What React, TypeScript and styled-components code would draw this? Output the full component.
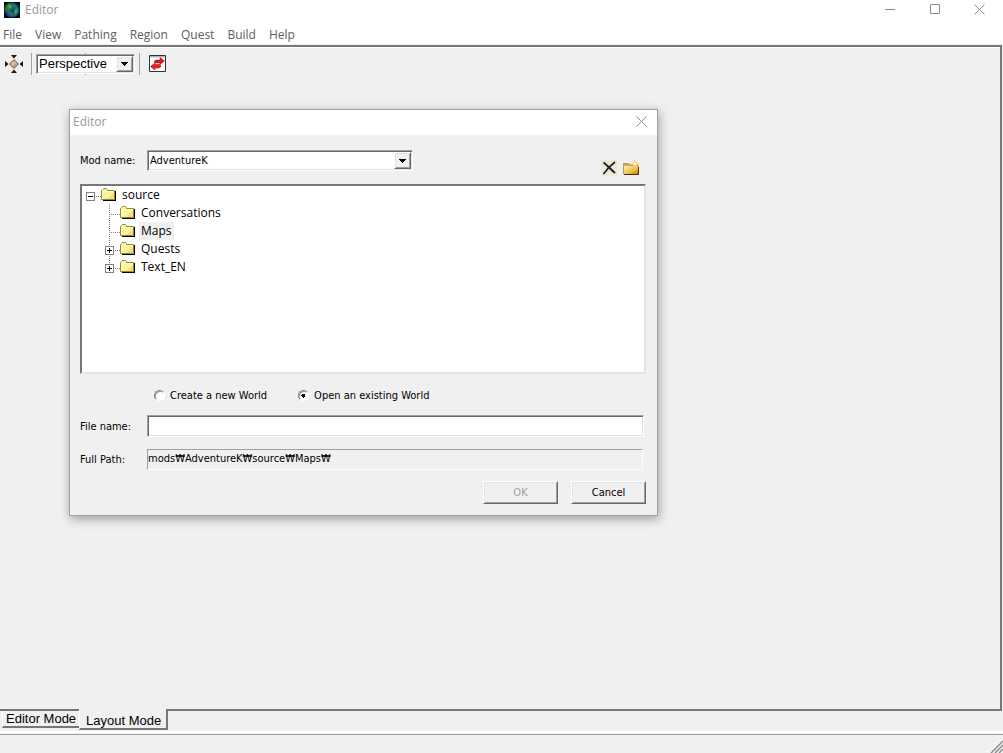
import React, { useState } from "react";
import styled, { createGlobalStyle, css } from "styled-components";

const face = "#f0f0f0";
const shade = "#a0a0a0";
const dark = "#696969";
const light = "#e3e3e3";

const uiFont = `"Open Sans", "Noto Sans CJK KR", sans-serif`;
const dialogFont = `"DejaVu Sans Condensed", "Noto Sans CJK KR", sans-serif`;
const toolFont = `"Liberation Sans", Arial, sans-serif`;

const GlobalStyle = createGlobalStyle`
  * { box-sizing: border-box; }
  body { margin: 0; background: ${face}; font-family: ${uiFont}; font-size: 12px; color: #000; }
  button, input, select { font: inherit; color: inherit; margin: 0; }
`;

const sunken = css`
  border: 1px solid;
  border-color: ${shade} #fff #fff ${shade};
  box-shadow: inset 1px 1px 0 ${dark}, inset -1px -1px 0 ${light};
`;

const raised = css`
  border: 1px solid;
  border-color: #fff ${dark} ${dark} #fff;
  box-shadow: inset 1px 1px 0 ${light}, inset -1px -1px 0 ${shade};
`;

const Window = styled.div`
  position: relative;
  display: flex;
  flex-direction: column;
  min-height: 100vh;
  background: ${face};
`;

const TitleBar = styled.header`
  display: flex;
  align-items: center;
  height: 20px;
  padding: 0 1px 0 4px;
  background: #fff;
  color: #999;
`;

const Title = styled.h1`
  flex: 1;
  margin: 0 0 0 5px;
  font-size: 12px;
  font-weight: 400;
  line-height: 18px;
`;

const PlainButton = styled.button`
  display: flex;
  align-items: center;
  justify-content: center;
  padding: 0;
  border: 0;
  background: none;
`;

const CaptionButton = styled(PlainButton)`
  width: 45px;
  height: 18px;
  align-self: flex-start;
`;

const MenuBar = styled.nav`
  display: flex;
  gap: 13px;
  height: 24px;
  padding: 0 3px;
  background: #fff;
`;

const MenuItem = styled(PlainButton)`
  height: 28px;
  margin-top: 1px;
  color: #606060;
  line-height: 28px;
  align-self: flex-start;
`;

const Workspace = styled.main`
  flex: 1;
  margin: 1px 1px 0 0;
  border: solid #777;
  border-width: 2px 2px 2px 0;
  box-shadow: inset 0 1px 0 #fff;
`;

const Toolbar = styled.div`
  display: flex;
  align-items: center;
  height: 33px;
  padding: 0 5px;
  font-family: ${toolFont};
  font-size: 13px;
`;

const Separator = styled.span<{ $before: number; $after: number }>`
  width: 1px;
  height: 22px;
  margin: 0 ${(p) => p.$after}px 0 ${(p) => p.$before}px;
  background: ${shade};
`;

const ToolCombo = styled.div`
  width: 99px;
  padding: 1px 0;
  background: linear-gradient(${shade}, ${shade}) 49px 0 / 1px 100% no-repeat;
`;

const Combo = styled.div<{ $height: number }>`
  position: relative;
  display: flex;
  height: ${(p) => p.$height}px;
  background: #fff;
  ${sunken}
`;

const Select = styled.select`
  appearance: none;
  flex: 1;
  min-width: 0;
  padding: 0 18px 0 2px;
  border: 0;
  outline: 0;
  background: transparent;
`;

const ComboArrow = styled.span`
  position: absolute;
  top: 1px;
  right: 1px;
  bottom: 1px;
  width: 17px;
  display: flex;
  align-items: center;
  justify-content: center;
  background: ${face};
  pointer-events: none;
  ${raised}
`;

const TabStrip = styled.div`
  display: flex;
  align-items: flex-start;
  height: 20px;
  padding-left: 2px;
  font-family: ${toolFont};
  font-size: 13px;
`;

const Tab = styled.button<{ $active?: boolean }>`
  position: relative;
  height: ${(p) => (p.$active ? 21 : 17)}px;
  margin-top: ${(p) => (p.$active ? -2 : 0)}px;
  padding: ${(p) => (p.$active ? "3px 5px 0 6px" : "0 3px")};
  border: solid;
  border-width: 0 ${(p) => (p.$active ? 2 : 0)}px 2px 1px;
  border-color: #fff #777 #777 #fff;
  background: ${face};
  line-height: 15px;
`;

const StatusBar = styled.footer`
  display: flex;
  align-items: flex-end;
  justify-content: flex-end;
  height: 22px;
  border-top: 1px solid #fff;
  box-shadow: inset 0 1px 0 #fff, inset 0 2px 0 ${face}, inset 0 3px 0 ${shade};
`;

const Dialog = styled.section`
  position: absolute;
  top: 109px;
  left: 69px;
  width: 589px;
  border: 1px solid ${shade};
  background: ${face};
  box-shadow: 1px 3px 10px rgba(0, 0, 0, 0.35);
  font-family: ${dialogFont};
  font-size: 11px;
`;

const DialogTitle = styled.header`
  display: flex;
  align-items: center;
  justify-content: space-between;
  height: 25px;
  padding: 0 10px 2px 3px;
  background: #fff;
  color: #999;
  font-family: ${uiFont};
  font-size: 12px;
`;

const DialogBody = styled.form`
  padding: 15px 11px 11px 10px;
`;

const ModRow = styled.div`
  display: grid;
  grid-template-columns: 67px 266px 1fr;
  height: 26px;
  margin-bottom: 8px;
`;

const Label = styled.label`
  padding-top: 1px;
  line-height: 20px;
`;

const IconTools = styled.div`
  display: flex;
  justify-content: flex-end;
  align-items: flex-end;
  gap: 6px;
  padding-right: 7px;
`;

const Tree = styled.ul`
  height: 190px;
  margin: 0;
  padding: 0;
  list-style: none;
  background: #fff;
  border: 2px solid;
  border-color: #777 ${light} ${light} #777;
  font-family: ${uiFont};
  font-size: 12px;
`;

const Branch = styled.ul`
  margin: 0;
  padding: 0 0 0 19px;
  list-style: none;
`;

const TreeRow = styled.div`
  display: flex;
  align-items: center;
  height: 18px;
`;

const dotsAcross = `repeating-linear-gradient(90deg, #808080 0 1px, transparent 1px 2px) 8px 10px / 11px 1px no-repeat`;
const dotsDown = (h: string) =>
  `repeating-linear-gradient(#808080 0 1px, transparent 1px 2px) 8px 0 / 1px ${h} no-repeat`;

const Junction = styled.span<{ $root?: boolean; $last?: boolean }>`
  width: 19px;
  height: 18px;
  padding: 6px 0 0 4px;
  background: ${(p) => (p.$root ? dotsAcross : `${dotsAcross}, ${dotsDown(p.$last ? "11px" : "100%")}`)};
`;

const Expander = styled(PlainButton)`
  width: 9px;
  height: 9px;
  border: 1px solid #808080;
  background: #fff;
`;

const NodeName = styled.button<{ $selected?: boolean }>`
  height: 18px;
  margin-left: 3px;
  padding: 0 2px;
  border: 0;
  background: ${(p) => (p.$selected ? face : "transparent")};
  line-height: 18px;
`;

const Choices = styled.div`
  display: flex;
  gap: 31px;
  height: 20px;
  margin: 11px 0 10px;
  padding-left: 74px;
`;

const Choice = styled.label`
  display: flex;
  align-items: center;
  gap: 5px;
`;

const Radio = styled.input`
  appearance: none;
  width: 11px;
  height: 11px;
  border: 1px solid;
  border-color: #808080 #fff #fff #808080;
  border-radius: 50%;
  background: #fff;
  box-shadow: inset 1px 1px 0 ${shade};
  &:checked {
    background: radial-gradient(circle, #000 0 2px, #fff 2px);
  }
`;

const Field = styled.div<{ $gap: number }>`
  display: grid;
  grid-template-columns: 67px 1fr;
  align-items: center;
  padding-right: 2px;
  margin-bottom: ${(p) => p.$gap}px;
`;

const FileInput = styled.input`
  min-width: 0;
  height: 22px;
  padding: 0 3px;
  outline: 0;
  background: #fff;
  ${sunken}
`;

const PathOutput = styled.input`
  min-width: 0;
  height: 21px;
  margin-right: 1px;
  padding: 0 0 2px;
  border: 1px solid;
  border-color: ${shade} #fff #fff ${shade};
  outline: 0;
  background: transparent;
`;

const Actions = styled.div`
  display: flex;
  justify-content: flex-end;
  gap: 13px;
`;

const PushButton = styled.button`
  width: 75px;
  height: 23px;
  padding: 0;
  background: ${face};
  ${raised}
  &:disabled {
    color: ${shade};
  }
`;

const DownArrow = () => (
  <svg width="7" height="4" shapeRendering="crispEdges" aria-hidden="true">
    <path d="M0 0h7v1h-1v1h-1v1h-1v1h-1v-1h-1v-1h-1v-1h-1z" />
  </svg>
);

const Globe = () => (
  <svg width="16" height="16" viewBox="0 0 16 16" aria-hidden="true">
    <path fill="#061018" d="M0 0h16v16H0z" />
    <circle cx="8" cy="8" r="7.5" fill="#16467c" />
    <path fill="#247a3c" d="M2 3l3-2 4 1 1 3-2 2-2 1 1 3-2 2-2-4-2-2zM10 7l3-2 2 2-1 4-3 3-2-1 1-3z" />
    <path fill="#48a851" d="M4 3l3 0 1 2-3 2zM11 8l2-1 0 3-2 2z" />
    <path fill="#2c6fb2" d="M9 2l4 2-2 2-1-1zM7 10l2 1-1 3-2-1z" />
    <path fill="#04080c" d="M0 11l4 4 4 1H0zM0 0h3L0 4z" />
  </svg>
);

const MoveIcon = () => (
  <svg width="18" height="18" viewBox="0 0 18 18" aria-hidden="true">
    <path fill="#b89a80" stroke="#7c6656" d="M9 4.500l4.500 4.500-4.500 4.500L4.500 9z" />
    <path fill="#dac4ae" d="M9 6l2 2-3 3-2-2z" />
    <path
      fill="#2a120c"
      d="M6 0h6L9 3.500zM6 18h6L9 14.500zM0 6v6l3.500-3zM18 6v6l-3.500-3z"
    />
  </svg>
);

const SwapIcon = () => (
  <svg width="17" height="17" viewBox="0 0 17 17" aria-hidden="true">
    <path fill="#fff" stroke="#333" d="M.5.5h16v16H.5z" />
    <path fill="#b0b0b0" d="M1 1h15v1H1z" />
    <path fill="#e0e0e0" d="M1 2h15v1H1z" />
    <path fill="#e01818" stroke="#8a0c0c" strokeWidth=".5" d="M5 6.500l2-1.500h4V2.500L15.500 6 11 9.500V8H6z" />
    <path fill="#f02020" stroke="#8a0c0c" strokeWidth=".5" d="M12 11.500L10 13H6v2L1.500 11.500 6 8v1.500h5z" />
  </svg>
);

const Folder = () => (
  <svg width="16" height="14" viewBox="0 0 16 14" aria-hidden="true">
    <path fill="#000" d="M14 3h1v10H2v-1h12z" />
    <path fill="#fbf39a" stroke="#8c8a2e" d="M.5 11.500v-9l1-1h0l1-1h3l1 1v1h7v9z" />
    <path fill="#fffccb" d="M1 3h12v1H2v7H1z" />
    <path fill="#f0cf72" d="M13 5v6H6l3-2 2-2z" opacity=".7" />
  </svg>
);

const DeleteIcon = () => (
  <svg width="16" height="16" viewBox="0 0 16 16" aria-hidden="true">
    <path fill="#ebe8d8" d="M0 0h16v16H0z" />
    <path fill="none" stroke="#222" strokeWidth="2" d="M2.500 2.500c3 2 6 6 11.500 10.500" />
    <path fill="none" stroke="#222" strokeWidth="1.600" d="M14 2C10 5 6 9 2.500 14" />
  </svg>
);

const NewFolderIcon = () => (
  <svg width="16" height="16" viewBox="0 0 16 16" aria-hidden="true">
    <defs>
      <linearGradient id="gold" x1="0" y1="0" x2="1" y2="1">
        <stop offset="0" stopColor="#fff0a0" />
        <stop offset=".6" stopColor="#efc04c" />
        <stop offset="1" stopColor="#b87c14" />
      </linearGradient>
    </defs>
    <path fill="#d8ad48" stroke="#94722a" strokeWidth=".6" d="M.5 14V3.500h5L7 5h8v9z" />
    <path fill="url(#gold)" d="M1 6h14v8H1z" />
    <path fill="#4a3208" d="M1 14h15v1H1zM15 7h1v8h-1z" />
    <path stroke="#f2c23c" d="M12 0v8M8.500 4H16M9.500 1.500l5 5M14.500 1.500l-5 5" />
    <circle cx="12" cy="4" r="1.800" fill="#fff8d4" />
  </svg>
);

const CloseGlyph = () => (
  <svg width="11" height="11" viewBox="0 0 11 11" aria-hidden="true">
    <path stroke="#8c8c8c" d="M.5.5l10 10M10.500.5l-10 10" />
  </svg>
);

const Grip = () => (
  <svg width="13" height="13" viewBox="0 0 13 13" aria-hidden="true">
    <path stroke="#fff" d="M-1 13L13-1M4 13l9-9M8 13l5-5" />
    <path stroke="#8c8c8c" strokeWidth="1.500" d="M1 13L13 1M5 13l8-8M9 13l4-4" />
  </svg>
);

const folders = [
  { name: "Conversations", expandable: false },
  { name: "Maps", expandable: false },
  { name: "Quests", expandable: true },
  { name: "Text_EN", expandable: true },
];

const menus = ["File", "View", "Pathing", "Region", "Quest", "Build", "Help"];

function ExpandBox({ open, name }: { open?: boolean; name: string }) {
  return (
    <Expander type="button" aria-label={`${open ? "Collapse" : "Expand"} ${name}`}>
      <svg width="5" height="5" shapeRendering="crispEdges" aria-hidden="true">
        <path d={open ? "M0 2h5v1H0z" : "M0 2h2V0h1v2h2v1H3v2H2V3H0z"} />
      </svg>
    </Expander>
  );
}

function OpenWorldDialog() {
  const [selected, setSelected] = useState("Maps");
  const [mode, setMode] = useState("open");
  const [fileName, setFileName] = useState("");
  return (
    <Dialog role="dialog" aria-labelledby="dialog-title">
      <DialogTitle>
        <span id="dialog-title">Editor</span>
        <PlainButton type="button" aria-label="Close dialog">
          <CloseGlyph />
        </PlainButton>
      </DialogTitle>
      <DialogBody onSubmit={(e) => e.preventDefault()}>
        <ModRow>
          <Label htmlFor="mod">Mod name:</Label>
          <Combo $height={21}>
            <Select id="mod">
              <option>AdventureK</option>
            </Select>
            <ComboArrow>
              <DownArrow />
            </ComboArrow>
          </Combo>
          <IconTools>
            <PlainButton type="button" aria-label="Delete">
              <DeleteIcon />
            </PlainButton>
            <PlainButton type="button" aria-label="New folder">
              <NewFolderIcon />
            </PlainButton>
          </IconTools>
        </ModRow>
        <Tree>
          <li>
            <TreeRow>
              <Junction $root>
                <ExpandBox open name="source" />
              </Junction>
              <Folder />
              <NodeName type="button">source</NodeName>
            </TreeRow>
            <Branch>
              {folders.map((f, i) => (
                <li key={f.name}>
                  <TreeRow>
                    <Junction $last={i === folders.length - 1}>
                      {f.expandable && <ExpandBox name={f.name} />}
                    </Junction>
                    <Folder />
                    <NodeName type="button" $selected={selected === f.name} onClick={() => setSelected(f.name)}>
                      {f.name}
                    </NodeName>
                  </TreeRow>
                </li>
              ))}
            </Branch>
          </li>
        </Tree>
        <Choices>
          <Choice>
            <Radio type="radio" name="mode" checked={mode === "new"} onChange={() => setMode("new")} />
            Create a new World
          </Choice>
          <Choice>
            <Radio type="radio" name="mode" checked={mode === "open"} onChange={() => setMode("open")} />
            Open an existing World
          </Choice>
        </Choices>
        <Field $gap={12}>
          <Label htmlFor="file">File name:</Label>
          <FileInput id="file" value={fileName} onChange={(e) => setFileName(e.target.value)} />
        </Field>
        <Field $gap={11}>
          <Label htmlFor="path">Full Path:</Label>
          <PathOutput id="path" readOnly value={`mods₩AdventureK₩source₩${selected}₩`} />
        </Field>
        <Actions>
          <PushButton type="submit" disabled={!fileName}>
            OK
          </PushButton>
          <PushButton type="button">Cancel</PushButton>
        </Actions>
      </DialogBody>
    </Dialog>
  );
}

export default function App() {
  return (
    <Window>
      <GlobalStyle />
      <TitleBar>
        <Globe />
        <Title>Editor</Title>
        <CaptionButton aria-label="Minimize">
          <svg width="10" height="10" aria-hidden="true">
            <path fill="#8c8c8c" d="M0 5h10v1H0z" />
          </svg>
        </CaptionButton>
        <CaptionButton aria-label="Maximize">
          <svg width="10" height="10" aria-hidden="true">
            <path fill="none" stroke="#8c8c8c" d="M.5.5h9v9h-9z" />
          </svg>
        </CaptionButton>
        <CaptionButton aria-label="Close">
          <CloseGlyph />
        </CaptionButton>
      </TitleBar>
      <MenuBar>
        {menus.map((m) => (
          <MenuItem key={m}>{m}</MenuItem>
        ))}
      </MenuBar>
      <Workspace>
        <Toolbar>
          <PlainButton aria-label="Move">
            <MoveIcon />
          </PlainButton>
          <Separator $before={8} $after={4} />
          <ToolCombo>
            <Combo $height={20}>
              <Select aria-label="View mode">
                <option>Perspective</option>
              </Select>
              <ComboArrow>
                <DownArrow />
              </ComboArrow>
            </Combo>
          </ToolCombo>
          <Separator $before={4} $after={9} />
          <PlainButton aria-label="Swap">
            <SwapIcon />
          </PlainButton>
        </Toolbar>
      </Workspace>
      <TabStrip>
        <Tab>Editor Mode</Tab>
        <Tab $active>Layout Mode</Tab>
      </TabStrip>
      <StatusBar>
        <Grip />
      </StatusBar>
      <OpenWorldDialog />
    </Window>
  );
}
